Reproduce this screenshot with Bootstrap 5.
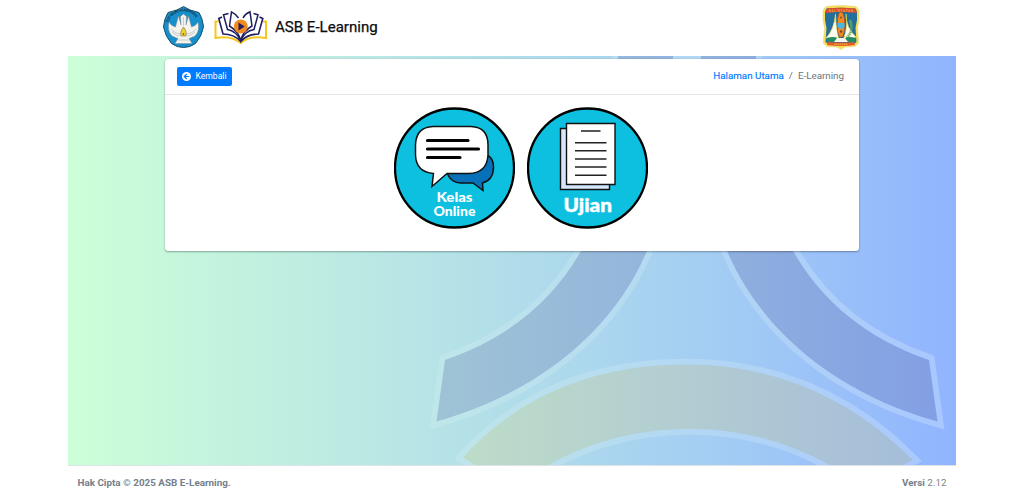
<!DOCTYPE html>
<html lang="id">
<head>
<meta charset="utf-8">
<meta name="viewport" content="width=device-width, initial-scale=1">
<title>ASB E-Learning</title>
<link href="https://cdn.jsdelivr.net/npm/bootstrap@5.3.0/dist/css/bootstrap.min.css" rel="stylesheet">
<style>
body{font-family:Roboto,"Liberation Sans",sans-serif;background:#fff;overflow:hidden}
svg{display:block}
.app-shell{width:888px;height:500px}
.top-bar{height:56px;padding:0 96px 2px 94px}
.brand-name{font-size:15.05px;line-height:20px;color:#0c0d0f;font-weight:400;-webkit-text-stroke:.25px #0c0d0f}
.stage{display:grid;height:408.500px;background:linear-gradient(90deg,#ccffd8 0%,#b7e4e6 40%,#a3cdf3 73%,#91b4ff 100%)}
.stage>*{grid-area:1/1}
.menu-card{width:694px;height:192px;margin:3px 0 0 97px;border:0;border-radius:3px;box-shadow:0 0 1px rgba(0,0,0,.25),0 1px 2px rgba(0,0,0,.3)}
.menu-card .card-header{height:36px;background:#fff;border-bottom:1px solid #e3e4e5;padding:0 15px 0 12px}
.btn-back{background:#007bff;color:#fff;font-size:8.6px;line-height:19px;height:19px;width:55px;border-radius:2px}
.crumbs{font-size:9.8px;--bs-breadcrumb-item-padding-x:5px}
.crumbs a{color:#007bff;-webkit-text-stroke:.15px #007bff}
.crumbs .active{color:#6c757d}
.menu-items{padding:12px 0 0 229px;gap:12px}
.menu-items text{font-family:Lato,Inter,sans-serif;font-weight:900;fill:#fff}
.foot{height:35.500px;padding:1px 9.5px 0;color:#7b8791;font-size:9.85px;border-top:1px solid #dee2e6}
.foot b{font-weight:700;color:#74808b}
.crest text{font-family:Roboto,sans-serif;font-weight:700}
</style>
</head>
<body>
<div class="app-shell mx-auto d-flex flex-column">
  <header class="top-bar d-flex align-items-center justify-content-between">
    <a href="#" class="d-flex align-items-center text-decoration-none">
      <svg class="crest" width="43" height="44" viewBox="162 5 43 44">
        <defs><path id="ring" d="M168.200 23Q172 12 183.500 11.300Q195 12 198.800 23"/></defs>
        <path d="M183.500 6.500Q189 10.500 199 12.500Q203 19 203.500 27Q201.500 37 195.500 43.500Q190 47.500 183.500 47.500Q177 47.500 171.500 43.500Q165.500 37 163.500 27Q164 19 168 12.500Q178 10.500 183.500 6.500Z" fill="#178fca" stroke="#17526f"/>
        <text font-size="4" fill="#123b56"><textPath href="#ring" textLength="35">TUT WURI HANDAYANI</textPath></text>
        <path d="M183.500 14L186.500 16.500L186 25L188.500 16L191.500 27Q196 26 198 22Q200 31 195 36L189 38.500L192 43.500H175L178 38.500L172 36Q167 31 169 22Q171 26 175.500 27L178.500 16L181 25L180.500 16.500Z" fill="#f5f3ed" stroke="#888d90" stroke-width=".5"/>
        <path d="M171 29Q175 34 182 34M196 29Q192 34 185 34M172 32Q177 37 182 36M195 32Q190 37 185 36M178 40H189M183.500 17V26" fill="none" stroke="#a3a5a5" stroke-width=".5"/>
        <path d="M183.500 27Q188 33 185.500 36H181.500Q179 33 183.500 27Z" fill="#f1d127" stroke="#655d35" stroke-width=".5"/>
        <circle cx="183.500" cy="34" r=".8" fill="#34372f"/>
      </svg>
      <svg width="54" height="38" viewBox="214 8 54 38" style="margin-left:9px">
        <g fill="none" stroke-linejoin="miter">
          <path d="M218.500 21.500H215.500V38Q231 35 240.800 43Q250 35 266 38V21.500H263" stroke="#f7c51d" stroke-width="2"/>
          <path d="M222 17L218.800 18.500L223 34Q234 34 240.800 41.500Q247 34 258.500 34L262.800 18.500L259.500 17" stroke="#201e60" stroke-width="1.600"/>
          <path d="M228.500 13.500L223.500 14.800L227.500 29.500Q236 31 240.800 40.500Q245 31 254 29.500L258 14.800L253.500 13.500" stroke="#201e60" stroke-width="1.500"/>
          <path d="M238.500 18Q236 14 231.500 11.800L229.500 26Q238 31 240.800 40.500Q243 31 252 26L250 11.800Q245 14 243 18" stroke="#201e60" stroke-width="1.500"/>
        </g>
        <circle cx="240.800" cy="26.500" r="6.900" fill="#f18b20"/>
        <path d="M238.500 22.500V30.500L244.700 26.500Z" fill="#201e60"/>
      </svg>
      <span class="brand-name" style="margin-left:7px">ASB E-Learning</span>
    </a>
    <svg class="crest" width="38" height="46" viewBox="822 4 38 46">
      <path d="M826 6.500Q841 4.500 856 6.500L859 10V20L857.500 28L858.800 43L855 46.500L845 47L841 49.500L837 47L827 46.500L823.200 43L824.500 28L823 20V10Z" fill="#f7df55" stroke="#efd88a" stroke-width=".7"/>
      <path d="M826.500 8.500Q841 7 855.500 8.500L857 12V20L855.500 28L856.500 42L853 44.500H829L825.500 42L826.500 28L825 20V12Z" fill="#226f9d"/>
      <path d="M827 8.500Q841 7 855 8.500L857 13L849 12.500Q841 11 833 12.500L825 13Z" fill="#db4e2a"/>
      <text x="829" y="11.500" font-size="2.800" textLength="24" fill="#f5a24b">BALIKPAPAN</text>
      <path d="M835.500 14Q834 30 826 38H838.500Q835.500 25 835.500 14ZM846 14Q846 28 856 37L852 39H843.500Q848 28 846 14Z" fill="#fffdf1" stroke="#e5d84c" stroke-width=".7"/>
      <path d="M846.500 38Q854 31 850 20" fill="none" stroke="#6eae55" stroke-width="2.500" stroke-dasharray="1.500 .6"/>
      <path d="M839 13Q841 11 843 13Q845 18 844.600 25Q845 32 842.500 37H839.500Q837 32 837.400 25Q837 18 839 13Z" fill="#ef8b24" stroke="#a7471d" stroke-width=".6"/>
      <circle cx="841" cy="17.500" r="1" fill="#784830"/><circle cx="841" cy="31.500" r="1.200" fill="#784830"/>
      <path d="M837.500 23H844.500V27Q842.500 29 841 29Q839.500 29 837.500 27Z" fill="#4bb5e3"/>
      <path d="M827 38Q834 36 838 38.500H844Q850 36 855 38V42H827Z" fill="#268d62"/>
      <path d="M837 38H845L848 42H834Z" fill="#f4f5eb"/>
      <path d="M828 42Q841 43 854 42L855 45Q841 47 827 45Z" fill="#e45b2b"/>
      <path d="M834 44.200H848" stroke="#f9be41" stroke-dasharray="1.500 .5"/>
    </svg>
  </header>

  <main class="stage">
    <svg width="888" height="408.500" viewBox="68 56 888 408.500" aria-hidden="true">
      <defs>
        <linearGradient id="edge" gradientUnits="userSpaceOnUse" x1="430" x2="944" y1="0" y2="0"><stop stop-color="#bfe7e9"/><stop offset=".45" stop-color="#b4d9f2"/><stop offset="1" stop-color="#a8c7fe"/></linearGradient>
        <linearGradient id="blue" gradientUnits="userSpaceOnUse" x1="437" x2="938" y1="0" y2="0"><stop stop-color="#9fc3d5"/><stop offset=".4" stop-color="#94b6dc"/><stop offset="1" stop-color="#839fe4"/></linearGradient>
        <linearGradient id="sand" gradientUnits="userSpaceOnUse" x1="463" x2="912" y1="0" y2="0"><stop stop-color="#bddcc8"/><stop offset=".5" stop-color="#b2ccd2"/><stop offset="1" stop-color="#a5bdd9"/></linearGradient>
        <path id="armL" d="M618 30V56C618 150 606 210 581 251C553 300 509 338 445 360L436.500 421.500C535 394 612 333 647 251C666 200 673 130 673 56V30Z"/>
        <path id="armR" d="M756 30V56C756 150 768 210 793 251C821 300 865 338 929 360L937.500 421.500C839 394 762 333 727 251C708 200 701 130 701 56V30Z"/>
        <path id="arch" d="M463 457.500C522 392 600 364.500 687 364.500C775 364.500 853 399 912.500 460L891 472L840 471C793 443 745 429 688 429C634 429 584 443 534 473L490 474Z"/>
      </defs>
      <g fill="none" stroke="url(#edge)" stroke-width="11.500">
        <path d="M673 56H701V62H673Z" fill="url(#edge)" stroke="none"/>
        <use href="#armL"/><use href="#armR"/><use href="#arch"/>
      </g>
      <use href="#armL" fill="url(#blue)"/><use href="#armR" fill="url(#blue)"/><use href="#arch" fill="url(#sand)"/>
    </svg>
    <section class="card menu-card">
      <div class="card-header d-flex align-items-center justify-content-between">
        <a href="#" class="btn-back d-flex align-items-center justify-content-center text-decoration-none">
          <svg width="9" height="9" viewBox="0 0 16 16" class="me-1"><circle cx="8" cy="8" r="8" fill="#fff"/><path d="M8.500 3.500L4 8L8.500 12.500M4.500 8H13" fill="none" stroke="#007bff" stroke-width="2.200"/></svg>Kembali
        </a>
        <nav><ol class="breadcrumb crumbs m-0"><li class="breadcrumb-item"><a href="#" class="text-decoration-none">Halaman Utama</a></li><li class="breadcrumb-item active">E-Learning</li></ol></nav>
      </div>
      <div class="menu-items d-flex">
        <a href="#"><svg width="121" height="122" viewBox="394 107 121 122">
          <circle cx="454.500" cy="168" r="59.500" fill="#0dc0e0" stroke="#000" stroke-width="2.300"/>
          <path d="M487 155Q493.500 158 493.500 167Q493.500 180 482.500 183L483 190.500L473 183H461Q451 183 447 173Z" fill="#0671b8" stroke="#111" stroke-width="1.500"/>
          <path d="M433 126.500H471Q488 127 488 145V155Q487 173 469 173.500H447L432 186.500L433.500 173.500Q416 172 415.500 155V145Q416 127 433 126.500Z" fill="#fff" stroke="#111" stroke-width="1.500"/>
          <path d="M427.500 140.500H468M427.500 149H478.500M427.500 157.500H460" stroke="#000" stroke-width="3.200" stroke-linecap="round"/>
          <text x="436.500" y="201.500" font-size="13" textLength="36" lengthAdjust="spacingAndGlyphs">Kelas</text>
          <text x="433.500" y="216" font-size="13" textLength="42" lengthAdjust="spacingAndGlyphs">Online</text>
        </svg></a>
        <a href="#"><svg width="121" height="122" viewBox="527 107 121 122">
          <circle cx="587.500" cy="168" r="59.500" fill="#0dc0e0" stroke="#000" stroke-width="2.300"/>
          <path d="M560.500 128.500H609.500V189.500H560.500Z" fill="#d5e7fb" stroke="#111" stroke-width="1.400"/>
          <path d="M566.500 123.500H615V184.500H566.500Z" fill="#fff" stroke="#111" stroke-width="1.400"/>
          <path d="M581 131H600.500M575 142.700H606.500M575 150.800H606.500M575 159H606.500M575 167H606.500M575 175.200H606.500" stroke="#222" stroke-width="1.600"/>
          <text x="563.500" y="211.500" font-size="19" textLength="48.500" lengthAdjust="spacingAndGlyphs" stroke="#fff" stroke-width=".4">Ujian</text>
        </svg></a>
      </div>
    </section>
  </main>
  <footer class="foot d-flex align-items-center justify-content-between">
    <b>Hak Cipta © 2025 ASB E-Learning.</b><span><b>Versi</b> 2.12</span>
  </footer>
</div>
<script src="https://cdn.jsdelivr.net/npm/bootstrap@5.3.0/dist/js/bootstrap.bundle.min.js"></script>
</body>
</html>
